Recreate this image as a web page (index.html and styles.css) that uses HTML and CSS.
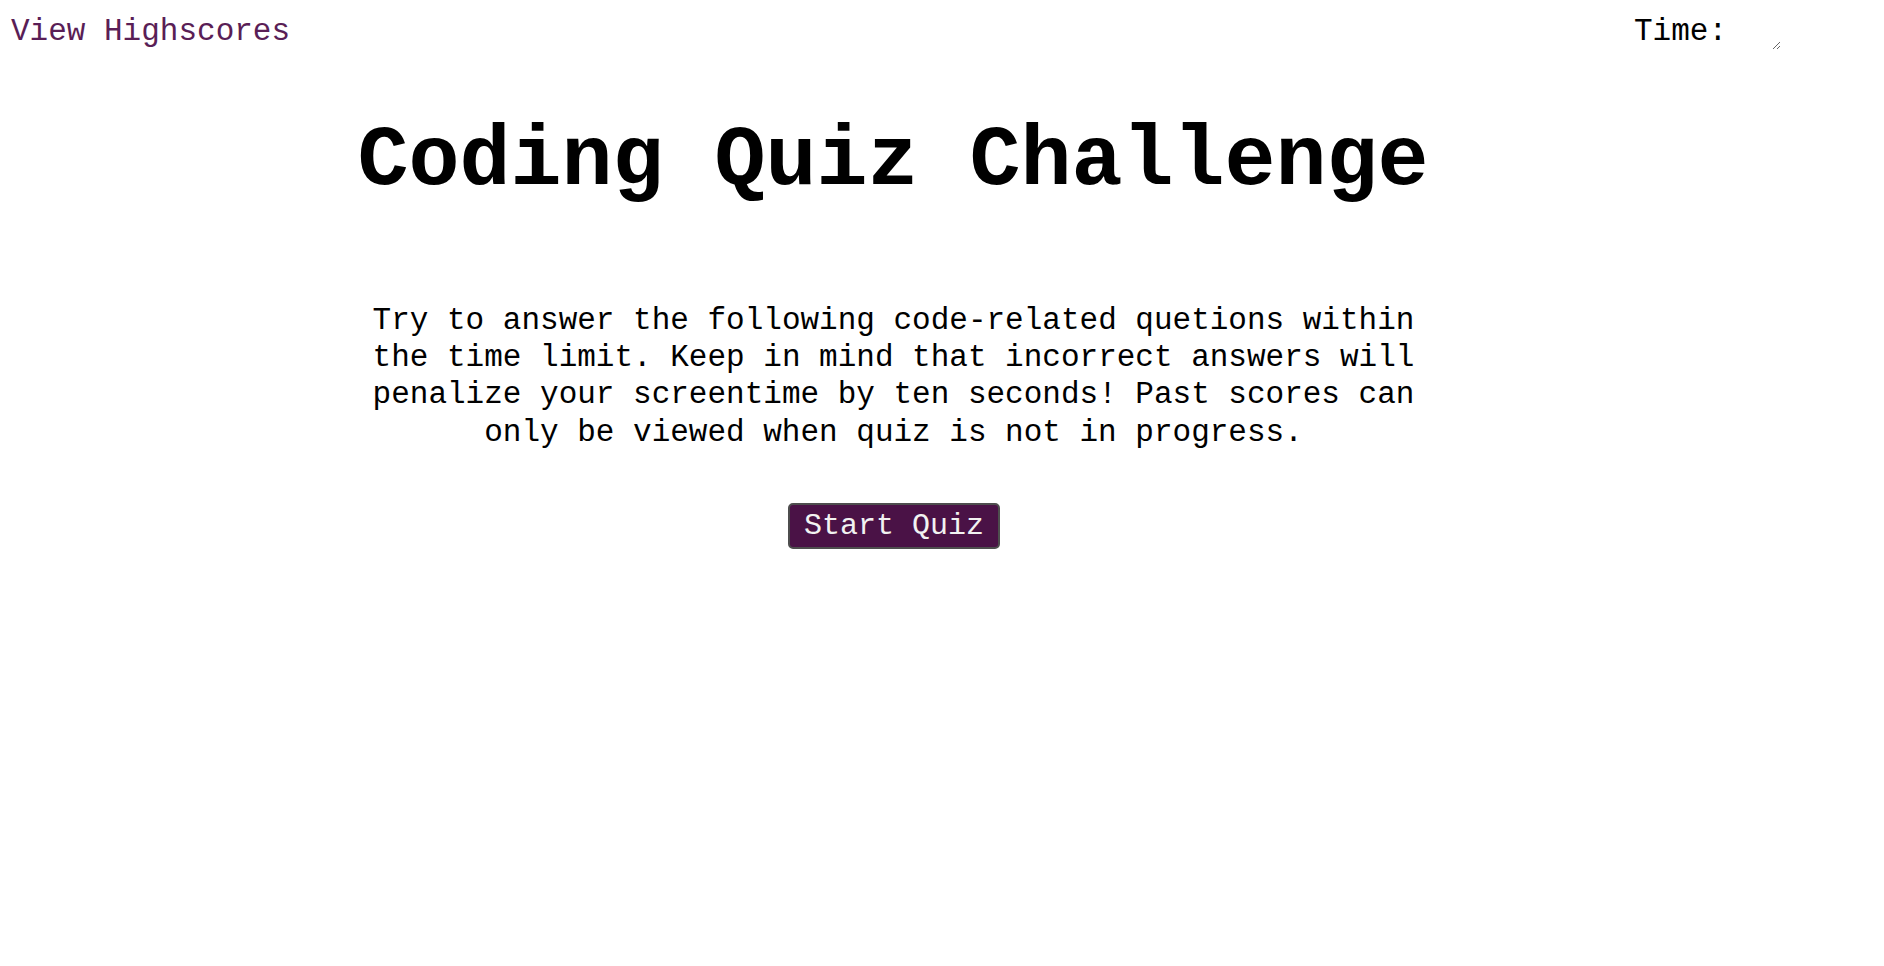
FILE: index.html
```html
<!DOCTYPE html>
<html lang="en">
<head>
<meta charset="utf-8">
<title>Coding Quiz Challenge</title>
<link rel="stylesheet" href="styles.css">
</head>
<body>
<header class="topbar">
  <a class="scores-link" href="#">View Highscores</a>
  <div class="timer">
    <span class="timer-label">Time:</span><textarea class="timer-box"></textarea>
  </div>
</header>
<main class="intro">
  <h1 class="title">Coding Quiz Challenge</h1>
  <p class="lead">Try to answer the following code-related quetions within the time limit. Keep in mind that incorrect answers will penalize your screentime by ten seconds! Past scores can only be viewed when quiz is not in progress.</p>
  <button class="start-btn" type="button">Start Quiz</button>
</main>
</body>
</html>
```

FILE: styles.css
```css
html, body {
  margin: 0;
  padding: 0;
  background: #ffffff;
}

body {
  font-family: "Liberation Mono", "Courier New", monospace;
  color: #000000;
}

.topbar {
  display: flex;
  justify-content: space-between;
  align-items: flex-start;
  padding: 14px 103px 0 11px;
}

.scores-link {
  font-size: 31px;
  color: #5a1e56;
  text-decoration: none;
}

.timer {
  display: flex;
  align-items: flex-start;
  font-size: 31px;
}

.timer-box {
  width: 54px;
  height: 36px;
  margin-left: 0;
  border: none;
  outline: none;
  padding: 0;
  background: transparent;
  font-family: inherit;
}

.intro {
  display: flex;
  flex-direction: column;
  align-items: center;
  margin-right: 98px;
  padding-top: 63px;
}

.title {
  font-size: 85px;
  font-weight: bold;
  margin: 0;
}

.lead {
  font-size: 31px;
  line-height: 37.2px;
  max-width: 1050px;
  text-align: center;
  margin: 92px 0 0 1px;
}

.start-btn {
  margin: 52px 0 0 2px;
  font-family: "Liberation Mono", "Courier New", monospace;
  font-size: 30px;
  color: #f2f2f2;
  background: #4a1246;
  border: 2px solid #4e4e4e;
  border-radius: 5px;
  padding: 4px 14px 4px;
  cursor: pointer;
}
```
